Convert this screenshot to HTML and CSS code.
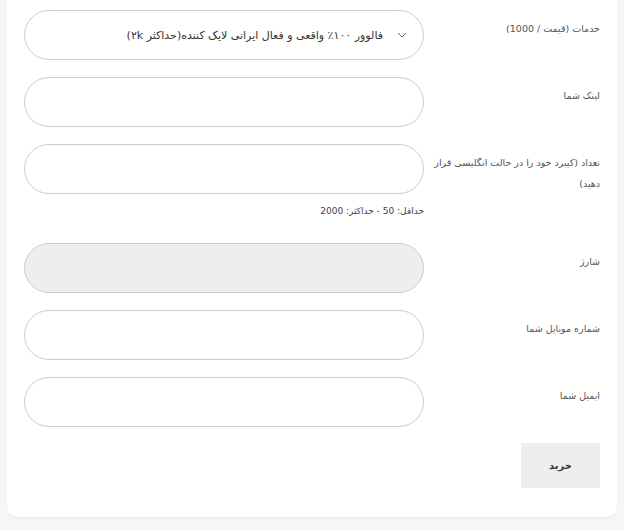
FILE: index.html
```html
<!DOCTYPE html>
<html lang="fa" dir="rtl">
<head>
    <meta charset="UTF-8">
    <meta name="viewport" content="width=device-width, initial-scale=1.0">
    <title>ثبت سفارش</title>
    <link rel="stylesheet" href="styles.css">
</head>
<body>
    <main class="card">
        <form class="order-form">
            <div class="row">
                <label class="label">خدمات (قیمت / 1000)</label>
                <div class="field">
                    <div class="select">
                        <svg class="chevron" width="10" height="6" viewBox="0 0 10 6"><path d="M1 1l4 4 4-4" fill="none" stroke="#666" stroke-width="1"/></svg>
                        <span>فالوور ۱۰۰٪ واقعی و فعال ایرانی لایک کننده(حداکثر ۲k)</span>
                    </div>
                </div>
            </div>

            <div class="row">
                <label class="label">لینک شما</label>
                <div class="field"><input class="input" type="text"></div>
            </div>

            <div class="row">
                <label class="label">تعداد (کیبرد خود را در حالت انگلیسی قرار دهید)</label>
                <div class="field">
                    <input class="input" type="text">
                    <p class="hint">حداقل: 50 - حداکثر: 2000</p>
                </div>
            </div>

            <div class="row">
                <label class="label">شارژ</label>
                <div class="field"><input class="input input-disabled" type="text" disabled></div>
            </div>

            <div class="row">
                <label class="label">شماره موبایل شما</label>
                <div class="field"><input class="input" type="text"></div>
            </div>

            <div class="row">
                <label class="label">ایمیل شما</label>
                <div class="field"><input class="input" type="text"></div>
            </div>

            <div class="actions">
                <button type="button" class="buy">خرید</button>
            </div>
        </form>
    </main>
</body>
</html>
```

FILE: styles.css
```css
body {
    font-family: "DejaVu Sans", sans-serif;
    margin: 0;
    padding: 0;
    background-color: #f6f6f6;
    color: #444;
}

.card {
    background-color: #fff;
    margin: 0 7px 12px;
    padding: 10px 17px 29px;
    border-radius: 0 0 10px 10px;
    box-shadow: 0 1px 3px rgba(0, 0, 0, 0.05);
}

.order-form {
    display: flex;
    flex-direction: column;
    gap: 17px;
}

.row {
    display: flex;
    gap: 3px;
}

.label {
    width: 173px;
    flex-shrink: 0;
    padding-top: 8px;
    font-size: 9.5px;
    line-height: 21px;
    color: #555;
}

.field {
    width: 401px;
}

.input,
.select {
    box-sizing: border-box;
    display: block;
    width: 100%;
    height: 50px;
    margin: 0;
    border: 1px solid #ccc;
    border-radius: 25px;
    background-color: #fff;
    font-family: inherit;
}

.input-disabled {
    background-color: #eee;
}

.select {
    display: flex;
    align-items: center;
    gap: 14px;
    padding: 0 16px;
    font-size: 11px;
    color: #333;
}

.chevron {
    flex-shrink: 0;
}

.hint {
    margin: 10px 0 8px;
    font-size: 9px;
    line-height: 14px;
    color: #444;
}

.actions {
    display: flex;
    margin-top: -1px;
}

.buy {
    width: 79px;
    height: 45px;
    border: none;
    background-color: #eee;
    font-family: inherit;
    font-size: 10px;
    font-weight: bold;
    color: #333;
    cursor: pointer;
}
```
